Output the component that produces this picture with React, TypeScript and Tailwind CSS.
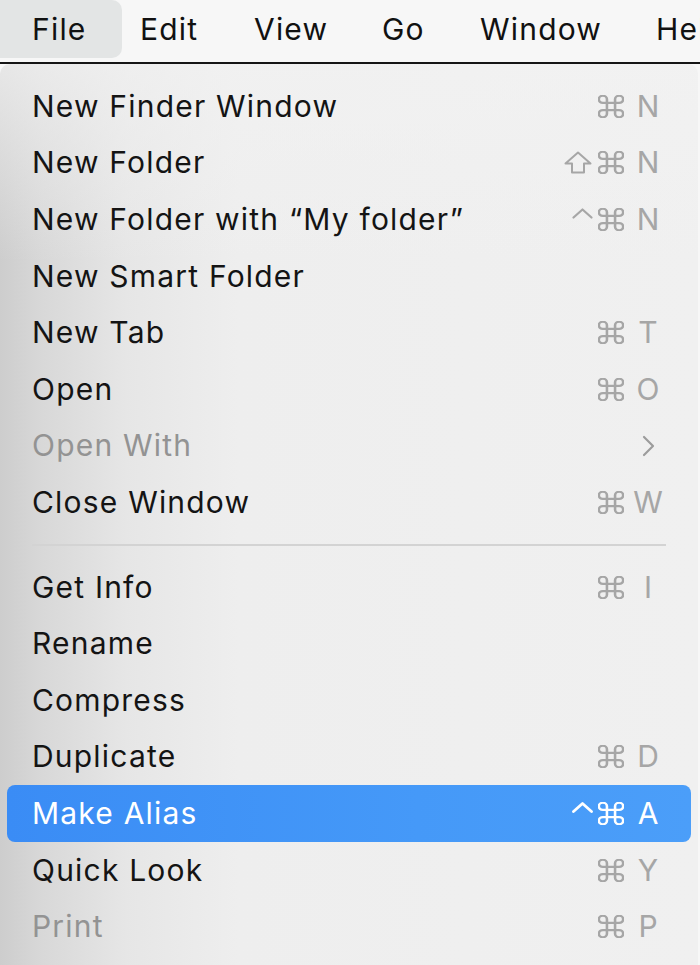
import React from "react";

type Item = {
  label: string;
  mods?: ("shift" | "ctrl" | "cmd")[];
  keyName?: string;
  submenu?: boolean;
  disabled?: boolean;
  active?: boolean;
};

const topItems: Item[] = [
  { label: "New Finder Window", mods: ["cmd"], keyName: "N" },
  { label: "New Folder", mods: ["shift", "cmd"], keyName: "N" },
  { label: "New Folder with “My folder”", mods: ["ctrl", "cmd"], keyName: "N" },
  { label: "New Smart Folder" },
  { label: "New Tab", mods: ["cmd"], keyName: "T" },
  { label: "Open", mods: ["cmd"], keyName: "O" },
  { label: "Open With", submenu: true, disabled: true },
  { label: "Close Window", mods: ["cmd"], keyName: "W" },
];

const bottomItems: Item[] = [
  { label: "Get Info", mods: ["cmd"], keyName: "I" },
  { label: "Rename" },
  { label: "Compress" },
  { label: "Duplicate", mods: ["cmd"], keyName: "D" },
  { label: "Make Alias", mods: ["ctrl", "cmd"], keyName: "A", active: true },
  { label: "Quick Look", mods: ["cmd"], keyName: "Y" },
  { label: "Print", mods: ["cmd"], keyName: "P", disabled: true },
];

function ModGlyph({ kind, color }: { kind: string; color: string }) {
  if (kind === "cmd") {
    return (
      <svg width="26" height="23" viewBox="2.4 2.4 19.2 19.2" preserveAspectRatio="none" fill="none">
        <path
          d="M15 6v12a3 3 0 1 0 3-3H6a3 3 0 1 0 3 3V6a3 3 0 1 0-3 3h12a3 3 0 1 0-3-3"
          stroke={color}
          strokeWidth="1.9"
          strokeLinecap="round"
          strokeLinejoin="round"
        />
      </svg>
    );
  }
  if (kind === "shift") {
    return (
      <svg width="28" height="23" viewBox="0 0 28 23" fill="none" className="mr-[6px]">
        <path
          d="M14 1.5L26.5 12.5H20V21.5H8V12.5H1.5Z"
          stroke={color}
          strokeWidth="2"
          strokeLinejoin="round"
        />
      </svg>
    );
  }
  return (
    <svg width="21" height="23" viewBox="0 0 21 23" fill="none" className="mr-[5px]">
      <path
        d="M1.5 9.5L10.5 1.5L19.5 9.5"
        stroke={color}
        strokeWidth={color === "#ffffff" ? "2.8" : "2.2"}
        strokeLinecap="round"
        strokeLinejoin="round"
      />
    </svg>
  );
}

function MenuRow({ item }: { item: Item }) {
  const labelColor = item.active
    ? "text-white"
    : item.disabled
    ? "text-[#939393]"
    : "text-[#141414]";
  const glyphColor = item.active ? "#ffffff" : "#a6a6a6";

  return (
    <div
      className={`mx-[7px] h-[56.6px] flex items-center pl-[25px] pr-[27px] rounded-[8px] ${
        item.active
          ? "bg-[linear-gradient(90deg,#3a8cf5_0%,#4599f8_60%,#4b9ef9_100%)]"
          : ""
      }`}
    >
      <span className={`flex-1 text-[30px] tracking-[0.04em] whitespace-nowrap ${labelColor}`}>
        {item.label}
      </span>
      {item.submenu && (
        <span className="w-[32px] flex justify-center">
          <svg width="16" height="26" viewBox="0 0 16 26" fill="none">
            <path
              d="M4 4l9 9-9 9"
              stroke="#9c9c9c"
              strokeWidth="2.2"
              strokeLinecap="round"
              strokeLinejoin="round"
            />
          </svg>
        </span>
      )}
      {item.keyName && (
        <span className="flex items-center">
          {item.mods?.map((m) => (
            <ModGlyph key={m} kind={m} color={glyphColor} />
          ))}
          <span
            className={`w-[32px] ml-[8px] text-center text-[30px] ${
              item.active ? "text-white" : "text-[#a6a6a6]"
            }`}
          >
            {item.keyName}
          </span>
        </span>
      )}
    </div>
  );
}

export default function App() {
  return (
    <div className="w-[700px] h-[965px] overflow-hidden bg-[#f7f7f7] font-['Inter','Liberation_Sans',sans-serif]">
      {/* Menu bar */}
      <div className="h-[62px] flex items-start text-[30px] tracking-[0.04em] text-[#111]">
        <div className="shrink-0 w-[122px] h-[58px] pl-[32px] flex items-center bg-[#e3e5e5] rounded-r-[10px]">
          File
        </div>
        <div className="shrink-0 w-[18px]" />
        <div className="shrink-0 w-[114px] h-[58px] flex items-center">Edit</div>
        <div className="shrink-0 w-[128px] h-[58px] flex items-center">View</div>
        <div className="shrink-0 w-[98px] h-[58px] flex items-center">Go</div>
        <div className="shrink-0 w-[176px] h-[58px] flex items-center">Window</div>
        <div className="shrink-0 h-[58px] flex items-center whitespace-nowrap">Help</div>
      </div>
      <div className="h-[2px] bg-[#151515]" />

      {/* Dropdown */}
      <div className="w-[698px] h-[901px] rounded-t-[10px] pt-[14px] bg-[linear-gradient(180deg,rgba(242,242,242,0.7)_0%,rgba(242,242,242,0)_22%),linear-gradient(90deg,#cdcdcd_0%,#d8d8d8_6%,#e6e6e6_18%,#eeeeee_34%,#f0f0f0_100%)]">
        {topItems.map((item) => (
          <MenuRow key={item.label} item={item} />
        ))}
        <div className="h-[28px] flex items-center px-[32px]">
          <div className="h-[2px] w-full bg-[#d3d3d3]" />
        </div>
        {bottomItems.map((item) => (
          <MenuRow key={item.label} item={item} />
        ))}
      </div>
    </div>
  );
}
